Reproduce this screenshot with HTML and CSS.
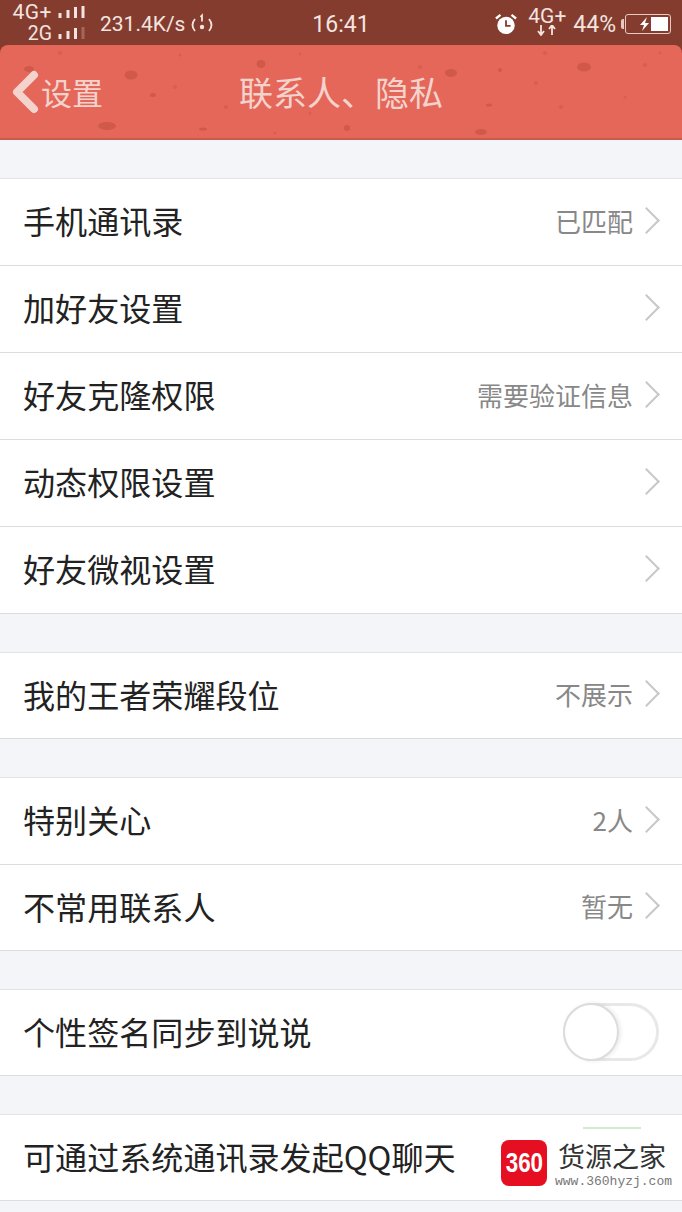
FILE: index.html
```html
<!DOCTYPE html>
<html lang="zh-CN">
<head>
    <meta charset="UTF-8">
    <meta name="viewport" content="width=device-width, initial-scale=1.0">
    <title>联系人、隐私</title>
    <link rel="stylesheet" href="styles.css">
</head>
<body>

    <!-- STATUS BAR -->
    <div class="status-bar">
        <div class="status-left">
            <div class="nets">
                <div class="net net-main">4G+
                    <svg class="bars" width="27" height="14" viewBox="0 0 27 14"><path d="M2 8v5M10 5v8M17.500 2v11M25 1v12" stroke="#f3e4e0" stroke-width="3"/></svg>
                </div>
                <div class="net">2G
                    <svg class="bars" width="27" height="14" viewBox="0 0 27 14"><path d="M2 8v5M10 5v8M17.500 2v11" stroke="#f3e4e0" stroke-width="3"/><path d="M25 1v12" stroke="#a5675a" stroke-width="3"/></svg>
                </div>
            </div>
            <span class="speed">231.4K/s</span>
            <svg class="hotspot" width="26" height="24" viewBox="0 0 26 24" fill="none" stroke="#f3e4e0" stroke-width="1.800">
                <path d="M6 7q-5 6 0 12M20 7q5 6 0 12"/>
                <circle cx="13" cy="15" r="2.200" fill="#f3e4e0" stroke="none"/>
                <path d="M11.500 5l1.500-1.500v6"/>
            </svg>
        </div>
        <div class="status-time">16:41</div>
        <div class="status-right">
            <svg class="alarm" width="22" height="22" viewBox="0 0 24 24">
                <circle cx="12" cy="13.500" r="9.500" fill="#fff"/>
                <path d="M12 8v6h5" fill="none" stroke="#843c2e" stroke-width="2"/>
                <path d="M1 6l5-4M23 6l-5-4" stroke="#fff" stroke-width="2.500"/>
            </svg>
            <div class="net-up">
                <span>4G+</span>
                <svg width="20" height="11" viewBox="0 0 20 11"><path d="M4 0v9M1 6l3 4 3-4M15 10V1M12 4l3-4 3 4" fill="none" stroke="#f3e4e0" stroke-width="1.800"/></svg>
            </div>
            <span class="percent">44%</span>
            <div class="battery">
                <svg class="bolt" width="11" height="14" viewBox="0 0 11 14"><path d="M8 0L1 8h4l-2 6 7-8H6z" fill="#fff"/></svg>
                <div class="battery-fill"></div>
            </div>
        </div>
    </div>

    <!-- TITLE BAR, speckled skin -->
    <header class="title-bar">
        <svg class="speckles" width="682" height="95" viewBox="0 0 682 95">
            <g fill="#c4503f" opacity="0.6">
                <ellipse cx="29" cy="24" rx="5" ry="3"/>
                <ellipse cx="131" cy="30" rx="6.500" ry="4.500"/>
                <ellipse cx="153" cy="50" rx="3" ry="2"/>
                <ellipse cx="107" cy="81" rx="9" ry="4"/>
                <ellipse cx="203" cy="84" rx="4" ry="1.500"/>
                <ellipse cx="261" cy="19" rx="4.500" ry="4"/>
                <ellipse cx="451" cy="28" rx="6" ry="4"/>
                <ellipse cx="500" cy="25" rx="2" ry="2"/>
                <ellipse cx="584" cy="22" rx="7" ry="4.500"/>
                <ellipse cx="489" cy="60" rx="3" ry="1.500"/>
                <ellipse cx="347" cy="83" rx="3" ry="3"/>
                <ellipse cx="481" cy="87" rx="6" ry="3"/>
            </g>
            <g fill="#d2594a" opacity="0.6">
                <circle cx="60" cy="8" r="2"/><circle cx="62" cy="55" r="1.500"/><circle cx="175" cy="42" r="2"/>
                <circle cx="180" cy="10" r="1.500"/><circle cx="226" cy="62" r="2"/><circle cx="300" cy="9" r="1.500"/>
                <circle cx="310" cy="68" r="1.500"/><circle cx="420" cy="22" r="2"/><circle cx="536" cy="38" r="2"/>
                <circle cx="545" cy="8" r="2"/><circle cx="561" cy="62" r="2"/><circle cx="625" cy="52" r="1.500"/>
                <circle cx="645" cy="20" r="2"/><circle cx="660" cy="8" r="1.500"/><circle cx="275" cy="88" r="1.500"/>
            </g>
        </svg>
        <a class="back">
            <svg width="28" height="44" viewBox="0 0 28 44"><path d="M23 5L6 22l17 17" fill="none" stroke="#f3d3cc" stroke-width="8" stroke-linecap="round" stroke-linejoin="round"/></svg>
            <span>设置</span>
        </a>
        <h1 class="page-title">联系人、隐私</h1>
    </header>

    <div class="content">
        <div class="group">
            <div class="row"><span class="label">手机通讯录</span><span class="value">已匹配</span><i class="arrow"></i></div>
            <div class="row"><span class="label">加好友设置</span><i class="arrow"></i></div>
            <div class="row"><span class="label">好友克隆权限</span><span class="value">需要验证信息</span><i class="arrow"></i></div>
            <div class="row"><span class="label">动态权限设置</span><i class="arrow"></i></div>
            <div class="row"><span class="label">好友微视设置</span><i class="arrow"></i></div>
        </div>

        <div class="group">
            <div class="row"><span class="label">我的王者荣耀段位</span><span class="value">不展示</span><i class="arrow"></i></div>
        </div>

        <div class="group">
            <div class="row"><span class="label">特别关心</span><span class="value">2人</span><i class="arrow"></i></div>
            <div class="row"><span class="label">不常用联系人</span><span class="value">暂无</span><i class="arrow"></i></div>
        </div>

        <div class="group">
            <div class="row"><span class="label">个性签名同步到说说</span><div class="toggle"><div class="knob"></div></div></div>
        </div>

        <div class="group">
            <div class="row"><span class="label">可通过系统通讯录发起QQ聊天</span></div>
        </div>
    </div>

    <!-- SITE MARK over the last row -->
    <div class="mark-trace"></div>
    <div class="site-mark">
        <div class="mark-logo"><span>360</span></div>
        <div class="mark-text">
            <div class="mark-name">货源之家</div>
            <div class="mark-url">www.360hyzj.com</div>
        </div>
    </div>

</body>
</html>
```

FILE: styles.css
```css
* { box-sizing: border-box; }
html, body { height: 100%; }
body {
    margin: 0; overflow: hidden; position: relative;
    background: #843c2e; color: #222;
    font-family: "Noto Sans CJK SC", "Noto Sans", sans-serif;
}

/* STATUS BAR */
.status-bar {
    height: 45px; padding-top: 3px; background: #843c2e; color: #f3e4e0;
    display: grid; grid-template-columns: 1fr auto 1fr; align-items: center;
    font-family: Roboto, "Liberation Sans", sans-serif;
}
.status-left { display: flex; align-items: center; padding-left: 11px; }
.nets { width: 74px; font-size: 19.500px; line-height: 21px; margin-top: -3px; }
.net { display: flex; justify-content: flex-end; align-items: center; gap: 6px; height: 21px; }
.net-main { font-size: 21px; letter-spacing: 0.500px; }
.bars { width: 27px; height: 14px; }
.speed { font-size: 21px; margin-left: 15px; }
.hotspot { margin-left: 4px; }
.status-time { font-size: 23px; }
.status-right { display: flex; align-items: center; justify-content: flex-end; padding-right: 11px; }
.alarm { margin-right: 10px; }
.net-up { width: 40px; display: flex; flex-direction: column; align-items: center; font-size: 21px; line-height: 19px; margin-top: -5px; }
.net-up svg { display: block; margin-top: -1px; }
.percent { font-size: 23px; margin-left: 6px; }
.battery {
    width: 46px; height: 20px; margin-left: 9px; padding: 2px;
    border: 1px solid #e8c8c0; border-radius: 3px; position: relative;
    display: flex; justify-content: flex-end; align-items: stretch; gap: 1px;
}
.battery::before {
    content: ""; position: absolute; left: -5px; top: 4px;
    width: 3px; height: 10px; background: #e8c8c0; border-radius: 2px 0 0 2px;
}
.bolt { align-self: center; }
.battery-fill { width: 17px; background: #fff; }

/* TITLE BAR */
.title-bar {
    height: 95px; position: relative;
    background: #e5675a; border-radius: 8px 8px 0 0;
    border-bottom: 2px solid #c95a4e;
    display: flex; align-items: center; justify-content: center;
}
.speckles { position: absolute; left: 0; top: 0; }
.back {
    position: absolute; left: 11px; top: 25px;
    display: flex; align-items: center; gap: 2px;
    color: #f3d3cc; font-size: 31px; line-height: 44px;
}
.page-title { position: relative; margin: 0; font-size: 34px; font-weight: normal; color: #f3d3cc; }

/* LIST */
.content { background: #f4f5f9; padding-top: 38px; height: 1072px; }
.group { background: #fff; border-top: 1px solid #e2e3e6; margin-bottom: 38px; }
.row {
    height: 87px; padding: 0 22px 4px 23px;
    display: flex; align-items: center;
    border-bottom: 1px solid #dcdde0;
}
.row:last-child { height: 86px; }
.group:first-child .row:last-child { height: 87px; }
.label { flex: 1; font-size: 32.100px; white-space: nowrap; }
.value { font-size: 26px; color: #888; margin-right: 7px; }
.arrow {
    width: 19px; height: 19px; margin-right: 1px; flex-shrink: 0;
    border-top: 2.500px solid #c8c8ca; border-right: 2.500px solid #c8c8ca;
    transform: translateX(-3px) rotate(45deg);
}

.toggle {
    width: 96px; height: 58px; margin-right: 1px; margin-top: 2px;
    border: 3px solid #e8e8ea; border-radius: 29px; background: #fff;
}
.knob {
    width: 56px; height: 58px; margin: -3px 0 0 -3px;
    border: 2px solid #dcdcde; border-radius: 50%; background: #fff;
    box-shadow: 2px 0 4px rgba(0,0,0,0.08);
}

/* SITE MARK */
.mark-trace {
    position: absolute; left: 583px; top: 1127px;
    width: 58px; height: 2px; background: #cfeccb;
}
.site-mark {
    position: absolute; left: 501px; top: 1140px;
    display: flex; align-items: flex-start; gap: 11px;
}
.mark-logo {
    width: 46px; height: 46px; border-radius: 8px; background: #e60f21; color: #fff;
    font-family: "Liberation Sans", sans-serif; font-weight: bold; font-size: 28px;
    display: flex; align-items: center; justify-content: center;
}
.mark-logo span { transform: scaleX(0.8); }
.mark-name { font-size: 27px; line-height: 32px; color: #333; }
.mark-url { font-family: "Liberation Mono", monospace; font-size: 13px; line-height: 15px; color: #777; margin: 2px 0 0 -3px; white-space: nowrap; }
```
